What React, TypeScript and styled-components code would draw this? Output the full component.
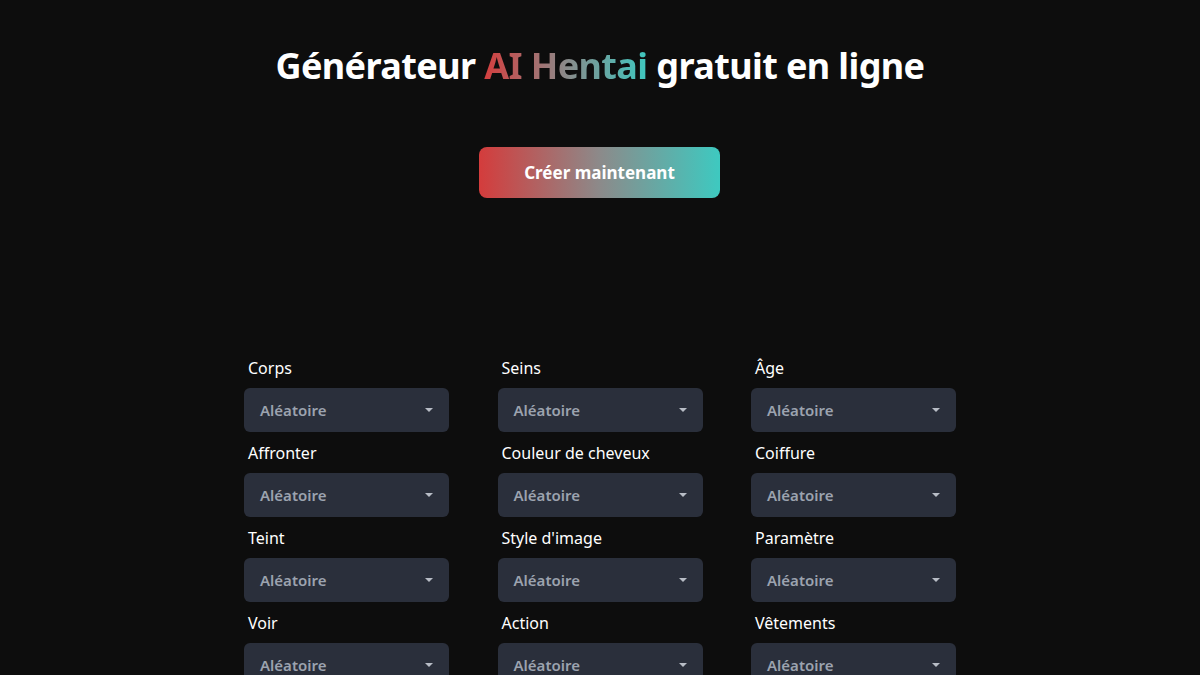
import styled, { createGlobalStyle } from "styled-components";

const GlobalStyle = createGlobalStyle`
  body {
    margin: 0;
    background: #0d0d0d;
    font-family: "Noto Sans", "Open Sans", sans-serif;
    color: #ffffff;
  }
`;

const fields = [
  "Corps",
  "Seins",
  "Âge",
  "Affronter",
  "Couleur de cheveux",
  "Coiffure",
  "Teint",
  "Style d'image",
  "Paramètre",
  "Voir",
  "Action",
  "Vêtements",
];

const App = () => {
  return (
    <Page>
      <GlobalStyle />
      <Hero>
        <Title>
          Générateur <GradientText>AI Hentai</GradientText> gratuit en ligne
        </Title>
        <CreateButton>Créer maintenant</CreateButton>
      </Hero>

      {/* options du générateur */}
      <OptionsGrid>
        {fields.map((name) => (
          <Field key={name}>
            <FieldLabel>{name}</FieldLabel>
            <Select>
              <span>Aléatoire</span>
              <Caret />
            </Select>
          </Field>
        ))}
      </OptionsGrid>
    </Page>
  );
};

const Page = styled.div`
  min-height: 100vh;
  background: #0d0d0d;
  display: flex;
  flex-direction: column;
  align-items: center;
`;

const Hero = styled.section`
  display: flex;
  flex-direction: column;
  align-items: center;
  padding-top: 42px;
`;

const Title = styled.h1`
  margin: 0;
  font-size: 36px;
  line-height: 48px;
  font-weight: 700;
  letter-spacing: -0.6px;
  color: #ffffff;
`;

const GradientText = styled.span`
  background: linear-gradient(90deg, #d43f3f 0%, #8a8a8a 50%, #3ec8c0 100%);
  -webkit-background-clip: text;
  background-clip: text;
  color: transparent;
`;

const CreateButton = styled.button`
  margin-top: 57px;
  margin-right: 1px;
  width: 241px;
  height: 51px;
  border: none;
  border-radius: 8px;
  background: linear-gradient(90deg, #d43c3c 0%, #8c8a8a 50%, #3ec9c0 100%);
  color: #ffffff;
  font-family: inherit;
  font-size: 17px;
  font-weight: 700;
  cursor: pointer;
`;

const OptionsGrid = styled.div`
  margin-top: 158px;
  display: grid;
  grid-template-columns: repeat(3, 205px);
  column-gap: 48.5px;
  row-gap: 9px;
`;

const Field = styled.div`
  display: flex;
  flex-direction: column;
  gap: 8px;
`;

const FieldLabel = styled.label`
  padding-left: 4px;
  font-size: 16px;
  line-height: 24px;
  color: #ffffff;
`;

const Select = styled.div`
  height: 44px;
  border-radius: 6px;
  background: #2a2f3b;
  display: flex;
  align-items: center;
  justify-content: space-between;
  padding: 0 16px;
  box-sizing: border-box;
  color: #9ca3af;
  font-size: 15px;
  font-weight: 600;
  cursor: pointer;
`;

const Caret = styled.span`
  width: 0;
  height: 0;
  border-left: 4px solid transparent;
  border-right: 4px solid transparent;
  border-top: 4px solid #b8bdc6;
`;

export default App;
